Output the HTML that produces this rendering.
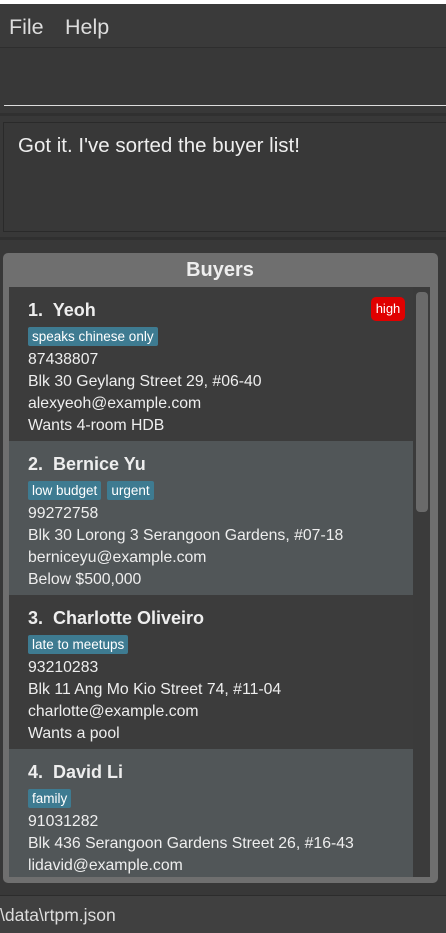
<!DOCTYPE html>
<html><head><style>
*{margin:0;padding:0;box-sizing:border-box}
body{width:446px;height:933px;background:#383838;font-family:"Liberation Sans",sans-serif;color:#fff;position:relative;overflow:hidden}
.a{position:absolute}
.card{position:absolute;left:9px;width:404px;height:154px;padding:10px 0 0 19px}
.nm{font-size:18px;font-weight:bold;color:#eee;height:27px;line-height:27px}
.tg{display:inline-block;background:#3e7b91;color:#fff;font-size:13.5px;padding:2px 4px;border-radius:2px;margin-right:6px;margin-top:3px}
.ln{font-size:15.8px;color:#eee;line-height:22px}
.t{height:25px}
</style></head><body>
<div class="a" style="left:0;top:0;width:446px;height:4px;background:#fff"></div>
<div class="a" style="left:0;top:4px;width:446px;height:44px;background:#3a3a3a;border-bottom:1px solid #2e2e2e"></div>
<div class="a" style="left:9px;top:15px;font-size:21.5px;color:#ddd">File</div>
<div class="a" style="left:65px;top:15px;font-size:21.5px;color:#ddd">Help</div>
<div class="a" style="left:4px;top:105px;width:442px;height:1px;background:#ddd"></div>
<div class="a" style="left:0;top:113px;width:446px;height:3px;background:#303030"></div>
<div class="a" style="left:3px;top:122px;width:446px;height:110px;border:1px solid #2a2a2a;background:#383838"></div>
<div class="a" style="left:18px;top:134px;font-size:20.5px;color:#eee">Got it. I've sorted the buyer list!</div>
<div class="a" style="left:0;top:237px;width:446px;height:3px;background:#303030"></div>
<div class="a" style="left:3px;top:253px;width:435px;height:630px;background:#6f6f6f;border-radius:5px"></div>
<div class="a" style="left:0;top:259px;width:440px;text-align:center;font-size:20px;font-weight:bold;color:#eee">Buyers</div>
<div class="a" style="left:9px;top:287px;width:421px;height:590px;background:#3b3b3b;overflow:hidden"></div>
<div class="card" style="top:287px;background:#3c3c3c">
<div class="nm">1.&nbsp; Yeoh</div>
<div class="t"><span class="tg">speaks chinese only</span></div>
<div class="ln">87438807</div><div class="ln">Blk 30 Geylang Street 29, #06-40</div><div class="ln">alexyeoh@example.com</div><div class="ln">Wants 4-room HDB</div>
</div>
<div class="a" style="left:371px;top:297px;width:34px;height:24px;background:#e00000;border-radius:5px;font-size:13px;text-align:center;line-height:24px">high</div>
<div class="card" style="top:441px;background:#515658">
<div class="nm">2.&nbsp; Bernice Yu</div>
<div class="t"><span class="tg">low budget</span><span class="tg">urgent</span></div>
<div class="ln">99272758</div><div class="ln">Blk 30 Lorong 3 Serangoon Gardens, #07-18</div><div class="ln">berniceyu@example.com</div><div class="ln">Below $500,000</div>
</div>
<div class="card" style="top:595px;background:#3c3c3c">
<div class="nm">3.&nbsp; Charlotte Oliveiro</div>
<div class="t"><span class="tg">late to meetups</span></div>
<div class="ln">93210283</div><div class="ln">Blk 11 Ang Mo Kio Street 74, #11-04</div><div class="ln">charlotte@example.com</div><div class="ln">Wants a pool</div>
</div>
<div class="card" style="top:749px;height:128px;background:#515658">
<div class="nm">4.&nbsp; David Li</div>
<div class="t"><span class="tg">family</span></div>
<div class="ln">91031282</div><div class="ln">Blk 436 Serangoon Gardens Street 26, #16-43</div><div class="ln">lidavid@example.com</div>
</div>
<div class="a" style="left:413px;top:287px;width:17px;height:590px;background:#3b3b3b"></div>
<div class="a" style="left:416px;top:292px;width:12px;height:220px;background:#6a6a6a;border-radius:4px"></div>
<div class="a" style="left:0;top:895px;width:446px;height:1px;background:#2c2c2c"></div>
<div class="a" style="left:0;top:896px;width:446px;height:37px;background:#404040"></div>
<div class="a" style="left:0;top:905px;font-size:17.5px;color:#ddd">\data\rtpm.json</div>
</body></html>
